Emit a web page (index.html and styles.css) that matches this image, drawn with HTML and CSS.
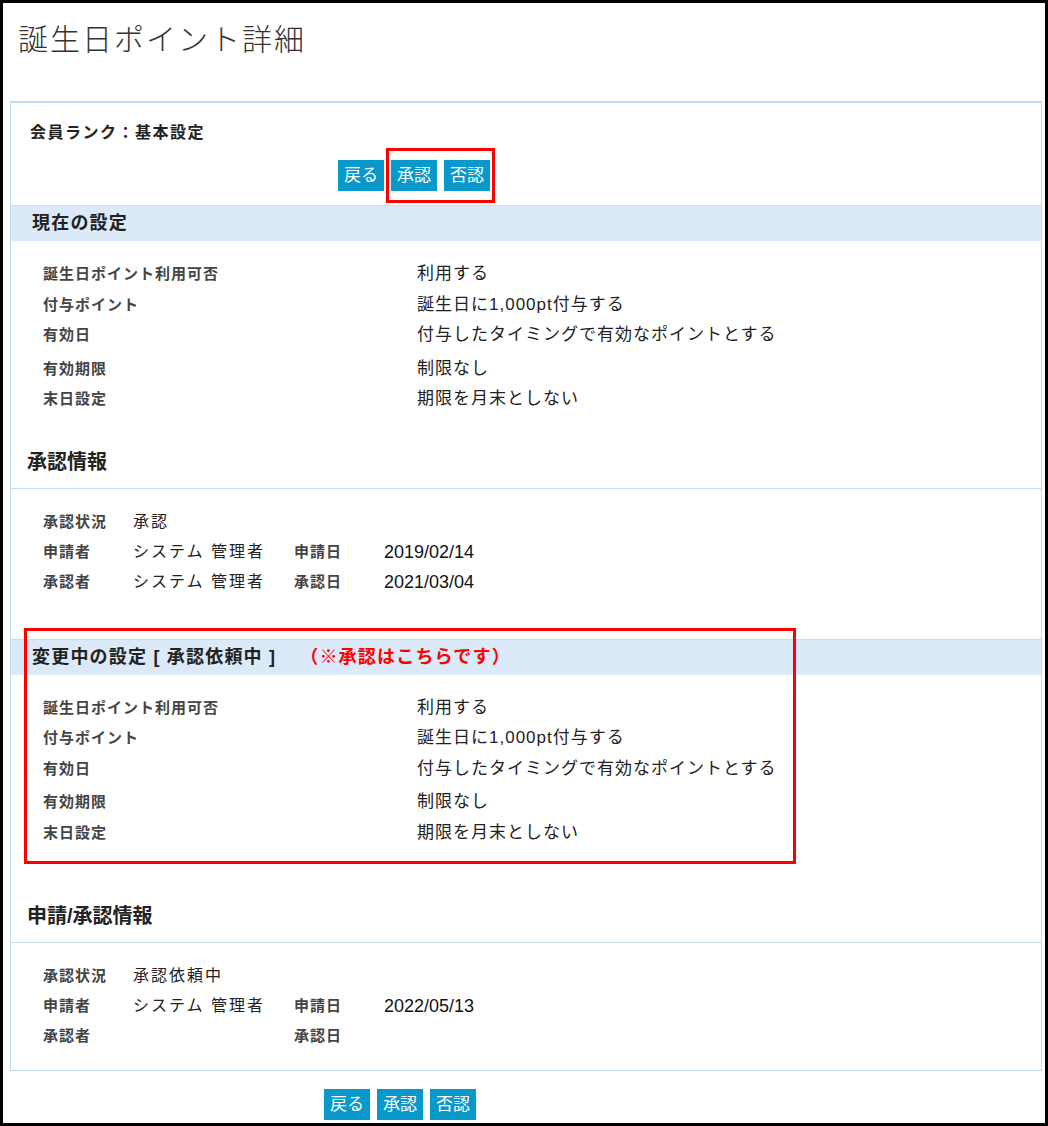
FILE: index.html
```html
<!DOCTYPE html>
<html>
<head>
    <meta charset="utf-8">
    <link rel="stylesheet" href="styles.css">
</head>
<body>
    <div class="frame">
        <h1 class="page-title">誕生日ポイント詳細</h1>

        <div class="panel">
            <p class="rank">会員ランク：基本設定</p>
            <div class="actions actions-top">
                <a class="btn">戻る</a>
                <span class="mark">
                    <a class="btn">承認</a>
                    <a class="btn">否認</a>
                </span>
            </div>

            <h2 class="band">現在の設定</h2>
            <div class="settings">
                <div class="row"><span class="label">誕生日ポイント利用可否</span><span class="value">利用する</span></div>
                <div class="row"><span class="label">付与ポイント</span><span class="value">誕生日に1,000pt付与する</span></div>
                <div class="row"><span class="label">有効日</span><span class="value">付与したタイミングで有効なポイントとする</span></div>
                <div class="row gap"><span class="label">有効期限</span><span class="value">制限なし</span></div>
                <div class="row"><span class="label">末日設定</span><span class="value">期限を月末としない</span></div>
            </div>

            <h3 class="sub-title">承認情報</h3>
            <div class="info">
                <span class="label">承認状況</span><span class="value">承認</span><span></span><span></span>
                <span class="label">申請者</span><span class="value">システム 管理者</span><span class="label">申請日</span><span class="date">2019/02/14</span>
                <span class="label">承認者</span><span class="value">システム 管理者</span><span class="label">承認日</span><span class="date">2021/03/04</span>
            </div>

            <div class="changed">
                <h2 class="band">変更中の設定 [ 承認依頼中 ]<span class="note">（※承認はこちらです）</span></h2>
                <div class="settings">
                    <div class="row"><span class="label">誕生日ポイント利用可否</span><span class="value">利用する</span></div>
                    <div class="row"><span class="label">付与ポイント</span><span class="value">誕生日に1,000pt付与する</span></div>
                    <div class="row"><span class="label">有効日</span><span class="value">付与したタイミングで有効なポイントとする</span></div>
                    <div class="row gap"><span class="label">有効期限</span><span class="value">制限なし</span></div>
                    <div class="row"><span class="label">末日設定</span><span class="value">期限を月末としない</span></div>
                </div>
            </div>

            <h3 class="sub-title second">申請/承認情報</h3>
            <div class="info">
                <span class="label">承認状況</span><span class="value">承認依頼中</span><span></span><span></span>
                <span class="label">申請者</span><span class="value">システム 管理者</span><span class="label">申請日</span><span class="date">2022/05/13</span>
                <span class="label">承認者</span><span class="value"></span><span class="label">承認日</span><span class="date"></span>
            </div>
        </div>

        <div class="actions actions-bottom">
            <a class="btn">戻る</a>
            <a class="btn">承認</a>
            <a class="btn">否認</a>
        </div>
    </div>
</body>
</html>
```

FILE: styles.css
```css
body {
    margin: 0;
    background-color: #fff;
    font-family: "Liberation Sans", "Noto Sans CJK JP", sans-serif;
    color: #222;
}
.frame {
    box-sizing: border-box;
    width: 1048px;
    height: 1126px;
    border: 3px solid #000;
    overflow: hidden;
}
.page-title {
    margin: 19px 0 43px 15px;
    font-size: 30px;
    line-height: 36px;
    font-weight: 300;
    letter-spacing: 2px;
    color: #333;
}
.panel {
    margin: 0 3px 0 7px;
    border: 1px solid #bfdaf2;
    border-top-width: 2px;
}
.rank {
    margin: 18px 0 0 19px;
    font-size: 16px;
    line-height: 24px;
    font-weight: bold;
    letter-spacing: 1.5px;
    color: #222;
}
.actions {
    display: flex;
    gap: 7px;
}
.actions-top {
    margin: 15px 0 0 327px;
}
.actions-bottom {
    margin: 18px 0 0 321px;
}
.mark {
    position: relative;
    display: flex;
    gap: 7px;
}
.mark::after {
    content: "";
    position: absolute;
    top: -12px;
    bottom: -12px;
    left: -5px;
    right: -5px;
    border: 3px solid #f00;
}
.btn {
    display: block;
    padding: 0 6px;
    height: 31px;
    line-height: 31px;
    font-size: 17px;
    color: #fff;
    background-color: #0898c9;
    cursor: pointer;
}
.band {
    margin: 14px 0 0 0;
    padding-left: 21px;
    height: 35px;
    line-height: 35px;
    border-top: 1px solid #c6dcf1;
    background-color: #dbe9f8;
    font-size: 18px;
    font-weight: bold;
    letter-spacing: 1.2px;
    color: #222;
}
.note {
    margin-left: 24px;
    color: #f00;
}
.settings {
    padding: 18px 0 0 32px;
}
.row {
    display: grid;
    grid-template-columns: 374px auto;
    line-height: 30.5px;
}
.row.gap {
    margin-top: 3px;
}
.label {
    font-size: 15px;
    font-weight: bold;
    letter-spacing: 1px;
    color: #444;
}
.value {
    font-size: 17px;
    letter-spacing: 1px;
    color: #222;
}
.date {
    font-size: 18px;
    color: #111;
}
.sub-title {
    margin: 32px 0 0 0;
    padding: 0 0 11px 16px;
    line-height: 30px;
    font-size: 20px;
    font-weight: bold;
    color: #222;
    border-bottom: 1px solid #c6dcf1;
}
.sub-title.second {
    margin-top: 37px;
}
.info {
    display: grid;
    grid-template-columns: 90px 161px 90px auto;
    padding: 18px 0 19px 32px;
    line-height: 30px;
}
.info .value {
    font-size: 16px;
    letter-spacing: 2px;
}
.changed {
    position: relative;
    margin-top: 23px;
    padding-bottom: 16px;
}
.changed .band {
    margin-top: 0;
}
.changed::after {
    content: "";
    position: absolute;
    top: -11px;
    bottom: 0;
    left: 13px;
    width: 772px;
    box-sizing: border-box;
    border: 3px solid #f00;
}
```
